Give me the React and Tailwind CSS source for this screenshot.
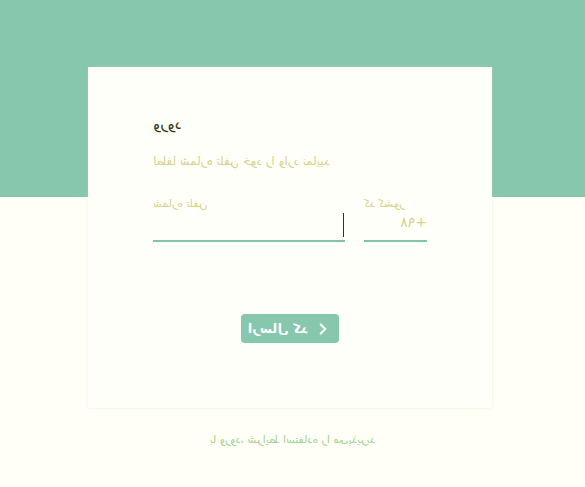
import React, { useState } from 'react';
import { ChevronLeft } from 'lucide-react';

const LoginPhone = () => {
  const [phone, setPhone] = useState('');
  const [country, setCountry] = useState('+۹۸');

  return (
    <div
      dir="rtl"
      className="-scale-x-100 min-h-screen bg-[linear-gradient(to_bottom,#86c7ae_197px,#fffff8_197px)] font-['DejaVu_Sans',sans-serif] pt-[67px] pb-10"
    >
      <div className="mr-[88px] ml-auto w-[404px] h-[341px] bg-[#fffffa] shadow-[0_0_3px_rgba(215,215,140,0.35)] px-[65px] pt-[45px]">
        <h2 className="text-[15px] leading-6 font-normal text-[#35350f]">ورود</h2>
        <p className="mt-4 text-[12px] leading-[18px] text-[#d6d28e]">لطفا شماره تلفن خود را وارد نمایید</p>

        <div className="mt-[26px] flex gap-[19px]">
          <div className="w-[192px]">
            <label className="block text-[11px] leading-4 text-[#d6d28e]">شماره تلفن</label>
            <div className="relative">
              <input
                dir="ltr"
                type="tel"
                value={phone}
                onChange={e => setPhone(e.target.value)}
                className="block w-full h-[30px] bg-transparent border-b-2 border-[#7fc4aa] outline-none text-[14px] text-[#3a3a12] caret-transparent"
              />
              {phone === '' && (
                <span className="absolute left-px top-[1px] h-[24px] w-px bg-[#35350f]" />
              )}
            </div>
          </div>
          <div className="w-[63px]">
            <label className="block text-[11px] leading-4 text-[#d6d28e]">کد کشور</label>
            <input
              dir="ltr"
              type="text"
              value={country}
              onChange={e => setCountry(e.target.value)}
              className="block w-full h-[30px] pb-2 bg-transparent border-b-2 border-[#7fc4aa] outline-none text-[14px] text-[#d6d28e]"
            />
          </div>
        </div>

        <div className="mt-[72px] flex justify-center">
          <button
            type="button"
            className="h-[29px] w-[98px] flex items-center justify-center gap-1.5 rounded bg-[#86c7ae] text-white text-[13px] font-bold"
          >
            <span>ارسال کد</span>
            <ChevronLeft size={18} strokeWidth={3} />
          </button>
        </div>
      </div>

      <p className="mt-6 text-center text-[11px] text-[#a3d393]">با ورود، شرایط استفاده را می‌پذیرید</p>
    </div>
  );
};

export default function App() {
  return <LoginPhone />;
}
